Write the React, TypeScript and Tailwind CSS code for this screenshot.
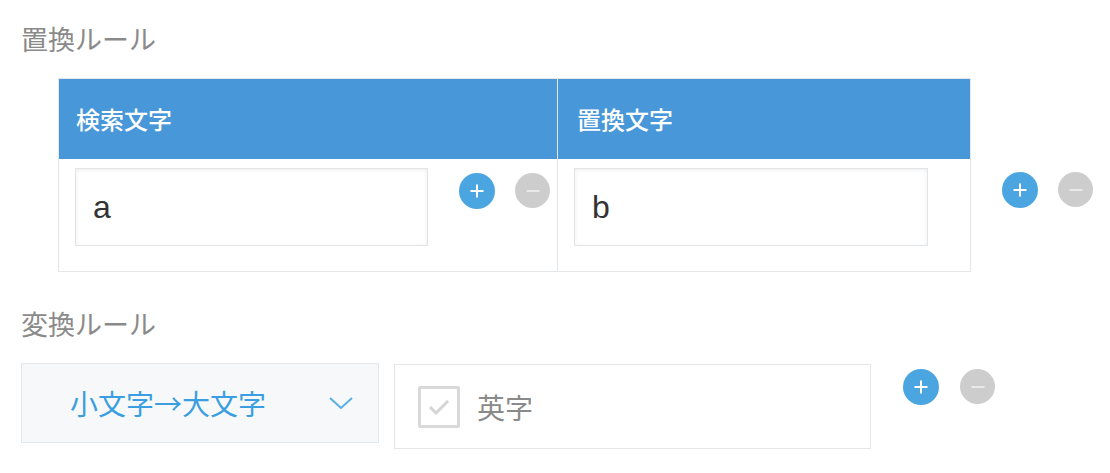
const jp = { fontFamily: '"Noto Sans CJK JP", "Liberation Sans", sans-serif' };

function PlusButton() {
  return (
    <button className="w-[36px] h-[36px] rounded-full bg-[#4ba5e1] flex items-center justify-center shrink-0">
      <svg width="16" height="16" viewBox="0 0 16 16">
        <path d="M8 1.5v13M1.5 8h13" stroke="#fff" strokeWidth="2" />
      </svg>
    </button>
  );
}

function MinusButton() {
  return (
    <button className="w-[35px] h-[35px] rounded-full bg-[#cdcdcd] flex items-center justify-center shrink-0">
      <svg width="16" height="16" viewBox="0 0 16 16">
        <path d="M1.5 8h13" stroke="#e9e9e9" strokeWidth="2" />
      </svg>
    </button>
  );
}

function TextBox({ value }: { value: string }) {
  return (
    <div
      className="h-[78px] border border-[#e1e5e8] bg-white shadow-[inset_0_1px_4px_rgba(0,0,0,0.07)] flex items-center pl-[17px] text-[32px] text-[#333]"
      style={{ fontFamily: '"Liberation Sans", Arial, sans-serif' }}
    >
      {value}
    </div>
  );
}

export default function App() {
  return (
    <div className="bg-white w-[1110px] h-[473px] pt-[21px] pl-[21px]" style={jp}>
      <h2 className="text-[27px] leading-[36px] text-[#8a8a8a]">置換ルール</h2>

      <div className="flex items-start mt-[21px] ml-[37px]">
        <div className="flex border border-[#e3e7ea]">
          <div className="w-[498px]">
            <div className="h-[80px] bg-[#4797d9] flex items-center pl-[17px] text-[24px] font-medium text-white">
              検索文字
            </div>
            <div className="h-[112px] pt-[9px] pl-[16px] flex items-start">
              <div className="w-[353px]">
                <TextBox value="a" />
              </div>
              <div className="flex gap-[20px] mt-[5px] ml-[31px]">
                <PlusButton />
                <MinusButton />
              </div>
            </div>
          </div>
          <div className="w-[413px] border-l border-[#e3e7ea]">
            <div className="h-[80px] bg-[#4797d9] flex items-center pl-[19px] text-[24px] font-medium text-white">
              置換文字
            </div>
            <div className="h-[112px] pt-[9px] pl-[16px]">
              <div className="w-[354px]">
                <TextBox value="b" />
              </div>
            </div>
          </div>
        </div>
        <div className="flex gap-[20px] mt-[94px] ml-[31px]">
          <PlusButton />
          <MinusButton />
        </div>
      </div>

      <h2 className="text-[27px] leading-[36px] text-[#8a8a8a] mt-[34px]">変換ルール</h2>

      <div className="flex items-start mt-[21px]">
        <button className="w-[358px] h-[80px] bg-[#f6f8f9] border border-[#e3e7ea] flex items-center pl-[48px] pr-[24px] text-[28px] text-[#3a9ee0]">
          <span className="flex-1 text-left">小文字→大文字</span>
          <svg width="26" height="14" viewBox="0 0 26 14">
            <path d="M2 2l11 10L24 2" fill="none" stroke="#5aaee6" strokeWidth="2" />
          </svg>
        </button>
        <div className="w-[477px] h-[85px] ml-[15px] mt-[1px] border border-[#e3e7ea] flex items-center pl-[23px]">
          <div className="w-[42px] h-[42px] border-[3px] border-[#d9d9d9] rounded-[2px] flex items-center justify-center">
            <svg width="24" height="18" viewBox="0 0 24 18">
              <path d="M3 9l6 6L21 3" fill="none" stroke="#d4d4d4" strokeWidth="3" />
            </svg>
          </div>
          <span className="ml-[17px] text-[28px] text-[#8a8a8a]">英字</span>
        </div>
        <div className="flex gap-[21px] mt-[6px] ml-[32px]">
          <PlusButton />
          <MinusButton />
        </div>
      </div>
    </div>
  );
}
